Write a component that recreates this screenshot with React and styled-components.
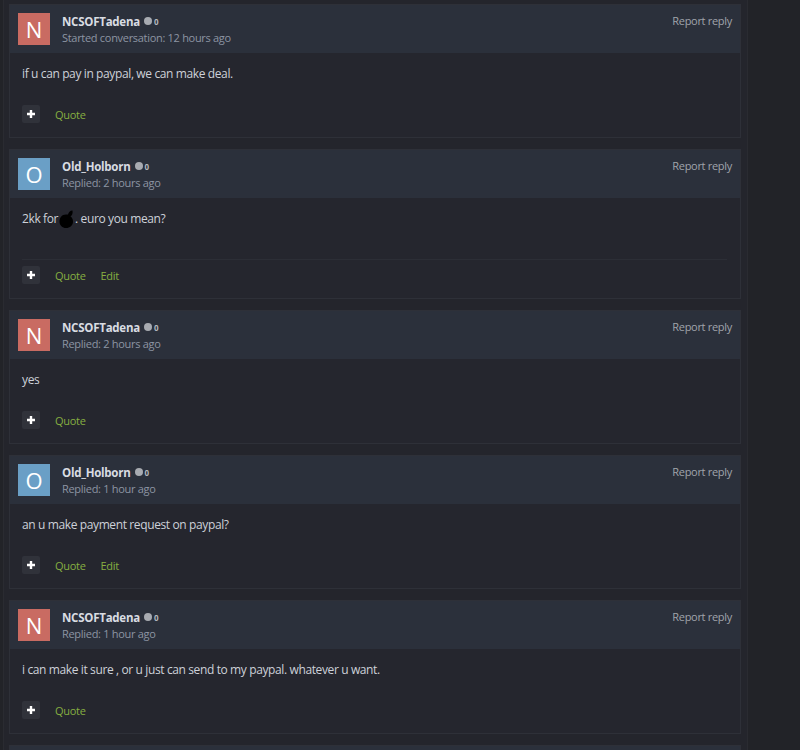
import React from 'react'
import styled, { createGlobalStyle } from 'styled-components'

const GlobalStyle = createGlobalStyle`
    html, body {
        margin: 0;
        padding: 0;
        background: #222328;
        height: 750px;
        overflow: hidden;
    }
    body {
        font-family: "Open Sans", "Liberation Sans", sans-serif;
    }
`;

const posts = [
    {author: 'NCSOFTadena', letter: 'N', color: '#c96b62', meta: 'Started conversation: 12 hours ago', text: 'if u can pay in paypal, we can make deal.'},
    {author: 'Old_Holborn', letter: 'O', color: '#6a9fc6', meta: 'Replied: 2 hours ago', redacted: true, edit: true, signature: true},
    {author: 'NCSOFTadena', letter: 'N', color: '#c96b62', meta: 'Replied: 2 hours ago', text: 'yes'},
    {author: 'Old_Holborn', letter: 'O', color: '#6a9fc6', meta: 'Replied: 1 hour ago', text: 'an u make payment request on paypal?', edit: true},
    {author: 'NCSOFTadena', letter: 'N', color: '#c96b62', meta: 'Replied: 1 hour ago', text: 'i can make it sure , or u just can send to my paypal. whatever u want.'},
]

// black scribble that hides a word in the second message
const Blob = () => (
    <BlobSvg width="16" height="14" viewBox="0 2 16 14">
        <path d="M7 4.5 C2.5 4.5 0.5 8 0.5 11.5 C0.5 15.5 3.5 18 7 18 C11 18 14 15.5 14 11.5 C14 9 13 7.5 11.5 6.5 C13 5.5 14 3.5 13.5 0.5 C11 0.5 9.5 2.5 9 4.6 C8.4 4.5 7.7 4.5 7 4.5 Z" fill="#000" />
    </BlobSvg>
)

const Post = ({post}) => (
    <Card>
        <Header>
            <Avatar $bg={post.color}>{post.letter}</Avatar>
            <Who>
                <NameRow>
                    <Name>{post.author}</Name>
                    <Dot />
                    <Rep>0</Rep>
                </NameRow>
                <Meta>{post.meta}</Meta>
            </Who>
            <Report>Report reply</Report>
        </Header>
        <Body>
            <Message>
                {post.redacted ? <>2kk for<Blob />. euro you mean?</> : post.text}
            </Message>
            {post.signature && <Signature />}
            <Footer>
                <PlusButton>
                    <svg width="10" height="10" viewBox="0 0 10 10">
                        <path d="M5 1v8M1 5h8" stroke="#fff" strokeWidth="2.4" />
                    </svg>
                </PlusButton>
                <Action>Quote</Action>
                {post.edit && <Action>Edit</Action>}
            </Footer>
        </Body>
    </Card>
)

const App = () => (
    <>
        <GlobalStyle />
        <Page>
            <Column>
                {posts.map((p, i) => <Post key={i} post={p} />)}
                <Card>
                    <StubHeader />
                </Card>
            </Column>
        </Page>
    </>
)

const Page = styled.div`
    display: flex;
    padding-left: 3px;
    height: 750px;
    overflow: hidden;
    background: #222328;
`;

const Column = styled.div`
    width: 732px;
    border-left: 1px solid #2a2b31;
    border-right: 1px solid #2a2b31;
    background: #24252c;
    padding: 4px 6px 0 5px;
    overflow: hidden;
`;

const Card = styled.div`
    border: 1px solid #2e3038;
    background: #25262e;
    margin-bottom: 11px;
`;

const Header = styled.div`
    display: flex;
    align-items: flex-start;
    background: #2b303b;
    padding: 8px;
`;

const StubHeader = styled.div`
    height: 48px;
    background: #2b303b;
`;

const Avatar = styled.div`
    width: 32px;
    height: 32px;
    background: ${p => p.$bg};
    color: #fff;
    font-size: 22px;
    line-height: 32px;
    text-align: center;
    font-family: "Open Sans", sans-serif;
    flex-shrink: 0;
`;

const Who = styled.div`
    margin-left: 12px;
    flex: 1;
`;

const NameRow = styled.div`
    display: flex;
    align-items: center;
    height: 16px;
`;

const Name = styled.span`
    font-weight: 700;
    font-size: 11.5px;
    letter-spacing: -0.25px;
    color: #d9dce2;
`;

const Dot = styled.span`
    width: 8px;
    height: 8px;
    border-radius: 50%;
    background: #a8abb1;
    margin-left: 4px;
`;

const Rep = styled.span`
    font-size: 8px;
    font-weight: 700;
    color: #b5b8be;
    margin-left: 2px;
`;

const Meta = styled.div`
    font-size: 11px;
    line-height: 15px;
    letter-spacing: -0.3px;
    color: #8d95a3;
    margin-top: 1px;
`;

const Report = styled.span`
    font-size: 11px;
    letter-spacing: -0.3px;
    color: #a0a4ab;
`;

const Body = styled.div`
    padding: 12px 12px 14px 12px;
`;

const Message = styled.div`
    font-size: 12px;
    letter-spacing: -0.38px;
    line-height: 18px;
    color: #cdd1d9;
    min-height: 18px;
`;

const BlobSvg = styled.svg`
    vertical-align: -3px;
    margin-left: 1px;
    overflow: visible;
`;

const Signature = styled.div`
    margin-top: 31px;
    margin-right: 1px;
    border-bottom: 1px solid #2c2e36;
    margin-bottom: -16px;
`;

const Footer = styled.div`
    display: flex;
    align-items: center;
    gap: 15px;
    margin-top: 22px;
`;

const PlusButton = styled.span`
    width: 18px;
    height: 18px;
    background: #30323a;
    border-radius: 2px;
    display: flex;
    align-items: center;
    justify-content: center;
`;

const Action = styled.span`
    font-size: 11px;
    letter-spacing: -0.3px;
    color: #85ae41;
`;

export default App
